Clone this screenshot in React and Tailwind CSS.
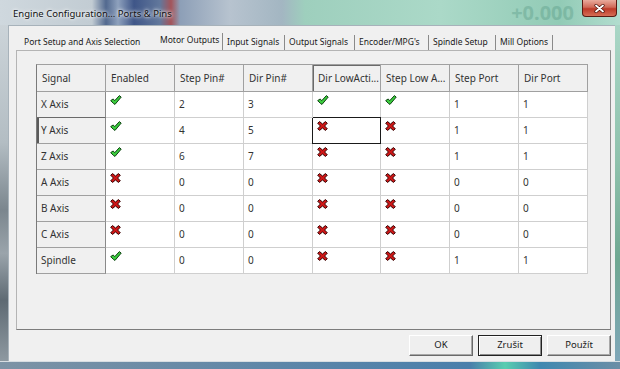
import React from 'react'

const columns = ['Signal', 'Enabled', 'Step Pin#', 'Dir Pin#', 'Dir LowActi...', 'Step Low A...', 'Step Port', 'Dir Port']

const rows = [
  ['X Axis', true, '2', '3', true, true, '1', '1'],
  ['Y Axis', true, '4', '5', false, false, '1', '1'],
  ['Z Axis', true, '6', '7', false, false, '1', '1'],
  ['A Axis', false, '0', '0', false, false, '0', '0'],
  ['B Axis', false, '0', '0', false, false, '0', '0'],
  ['C Axis', false, '0', '0', false, false, '0', '0'],
  ['Spindle', true, '0', '0', false, false, '1', '1'],
]

function Check() {
  return (
    <svg width="12" height="10" viewBox="0 0 12 10">
      <polygon
        points="0.7,5.6 3.1,4 4.8,5.6 9.4,0.6 11.2,2.1 5,9.4 3.6,8.6"
        fill="#3ccc3e"
        stroke="#0b420f"
        strokeWidth="1"
        strokeLinejoin="round"
      />
    </svg>
  )
}

function Cross() {
  return (
    <svg width="11" height="10" viewBox="0 0 11 10">
      <polygon
        points="0.7,2.2 2.6,0.6 5.5,3 8.4,0.6 10.3,2.2 7.6,5 10.3,7.8 8.4,9.4 5.5,7 2.6,9.4 0.7,7.8 3.4,5"
        fill="#cf1616"
        stroke="#360404"
        strokeWidth="1"
        strokeLinejoin="round"
      />
    </svg>
  )
}

const tabs = [
  { label: 'Port Setup and Axis Selection', w: 'w-[138px]', pl: 'pl-[8px]', first: true },
  { label: 'Motor Outputs', w: 'w-[69px]', pl: 'pl-[6px]', active: true },
  { label: 'Input Signals', w: 'w-[62px]', pl: 'pl-[4px]' },
  { label: 'Output Signals', w: 'w-[70px]', pl: 'pl-[4px]' },
  { label: "Encoder/MPG's", w: 'w-[74px]', pl: 'pl-[4px]' },
  { label: 'Spindle Setup', w: 'w-[67px]', pl: 'pl-[4px]' },
  { label: 'Mill Options', w: 'w-[57px]', pl: 'pl-[4px]' },
]

function App() {
  return (
    <div className="w-[620px] h-[369px] overflow-hidden flex flex-col font-['Noto_Sans','DejaVu_Sans',sans-serif] text-[#222]">
      {/* title bar */}
      <div className="h-[25px] flex items-start bg-[linear-gradient(90deg,#cfd8de_0px,#c2ccd3_92px,#52698f_106px,#8ea1bd_118px,#3f5688_134px,#62789c_160px,#a4545a_171px,#8d9fb7_180px,#b7c3cf_230px,#a3b6c2_282px,#9ecfbd_305px,#abd9c8_440px,#92cbb6_560px,#b2ddcf_620px)]">
        <span className="ml-[13px] mt-[8px] text-[9.5px] leading-[12px] text-[#111] [text-shadow:0_0_5px_#fff,0_0_3px_#fff]">
          Engine Configuration... Ports &amp; Pins
        </span>
        <span className="ml-auto mr-[8px] mt-[1px] text-[20px] leading-[24px] font-bold text-[#1f6b56] opacity-20">
          +0.000
        </span>
        <div className="w-[35px] h-[17px] mr-[3px] rounded-b-[4px] border border-t-0 border-[#5a1a12] bg-[linear-gradient(180deg,#e9ab9c,#d06a58_45%,#bd3a28_55%,#d66d55)] flex items-center justify-center">
          <svg width="11" height="9" viewBox="0 0 11 9">
            <path d="M2 1.5 L9 7.5 M9 1.5 L2 7.5" stroke="#4a1008" strokeWidth="3.2" strokeLinecap="round" />
            <path d="M2 1.5 L9 7.5 M9 1.5 L2 7.5" stroke="#fff" strokeWidth="1.8" strokeLinecap="round" />
          </svg>
        </div>
      </div>

      <div className="flex flex-1">
        {/* left frame */}
        <div className="w-[8px] bg-[linear-gradient(180deg,#ccd4d9,#b3bdc3_35%,#7b868e_55%,#9aa4ab_68%,#5e6a73_82%,#8e99a1)]" />

        {/* client area */}
        <div className="w-[607px] bg-[#f0f0f0] border-l border-t border-[#a7b2ba] flex flex-col pt-[7px] pl-[7px] pr-[4px]">
          {/* tab strip */}
          <div className="h-[17px] flex items-end text-[8.5px] text-[#1a1a1a]">
            {tabs.map((t) => (
              <div
                key={t.label}
                className={`${t.w} ${t.pl} flex items-center whitespace-nowrap ${
                  t.active ? 'h-[17px] pb-[3px] border-r border-[#8a8a8a]' : t.first ? 'h-[15px]' : 'h-[15px] border-r border-[#8a8a8a]'
                }`}
              >
                {t.label}
              </div>
            ))}
          </div>

          {/* tab page */}
          <div className="h-[280px] border border-[#b4b4b4] border-r-[#8c8c8c] border-b-[#7c7c7c] pt-[13px] pl-[19px]">
            <div className="w-[552px] grid grid-cols-[69px_69px_69px_69px_68px_69px_69px_69px] border-t border-l border-t-[#a0a0a0] border-l-[#7a7a7a] text-[10px] text-[#333]">
              {columns.map((c, i) => (
                <div
                  key={c}
                  className={`h-[27px] flex items-center pl-[5px] whitespace-nowrap bg-[#f0f0f0] border-r border-b border-[#a0a0a0] ${
                    i === 4 ? 'shadow-[inset_1px_1px_0_#6a6a6a]' : ''
                  }`}
                >
                  {c}
                </div>
              ))}
              {rows.map((r, ri) =>
                r.map((v, ci) => {
                  if (ci === 0) {
                    return (
                      <div
                        key={ci}
                        className={`h-[26px] flex items-center pl-[4px] bg-[#f0f0f0] border-r border-b ${
                          ri === 0 ? 'border-b-[#6a6a6a]' : 'border-b-[#a0a0a0]'
                        } border-r-[#8a8a8a] ${ri === 1 ? 'shadow-[inset_2px_0_0_#5a5a5a]' : ''}`}
                      >
                        {v}
                      </div>
                    )
                  }
                  const focus = ri === 1 && ci === 4
                  return (
                    <div
                      key={ci}
                      className={`h-[26px] bg-white border-r border-b ${
                        focus ? 'border-[#1a1a1a] shadow-[-1px_0_0_#1a1a1a,0_-1px_0_#1a1a1a]' : 'border-[#cfcfcf]'
                      } ${typeof v === 'boolean' ? 'pl-[4px] pt-[3px]' : 'flex items-center pl-[4px]'}`}
                    >
                      {typeof v === 'boolean' ? v ? <Check /> : <Cross /> : v}
                    </div>
                  )
                })
              )}
            </div>
          </div>

          {/* buttons */}
          <div className="mt-[5px] flex justify-end gap-[5px] text-[9.5px] text-[#1a1a1a]">
            <div className="w-[64px] h-[21px] flex items-center justify-center bg-[#efefef] border border-t-white border-l-white border-r-[#6a6a6a] border-b-[#6a6a6a] shadow-[inset_-1px_-1px_0_#a8a8a8]">
              OK
            </div>
            <div className="w-[64px] h-[21px] flex items-center justify-center bg-[#efefef] border border-[#222] shadow-[inset_1px_1px_0_#fff,inset_-1px_-1px_0_#8a8a8a]">
              Zrušit
            </div>
            <div className="w-[64px] h-[21px] flex items-center justify-center bg-[#efefef] border border-t-white border-l-white border-r-[#6a6a6a] border-b-[#6a6a6a] shadow-[inset_-1px_-1px_0_#a8a8a8]">
              Použít
            </div>
          </div>
        </div>

        {/* right frame */}
        <div className="flex-1 bg-[linear-gradient(180deg,#a9d6c6,#8fc2ad_40%,#6fa892_70%,#7fa6b8)]" />
      </div>

      {/* bottom frame */}
      <div className="h-[8px] border-t border-[#d8dee2] bg-[linear-gradient(90deg,#7d93a5,#5d86a8_280px,#4a7fab_470px,#58cdb0_505px,#3f88b0_540px,#6c8ea6)]" />
    </div>
  )
}

export default App
